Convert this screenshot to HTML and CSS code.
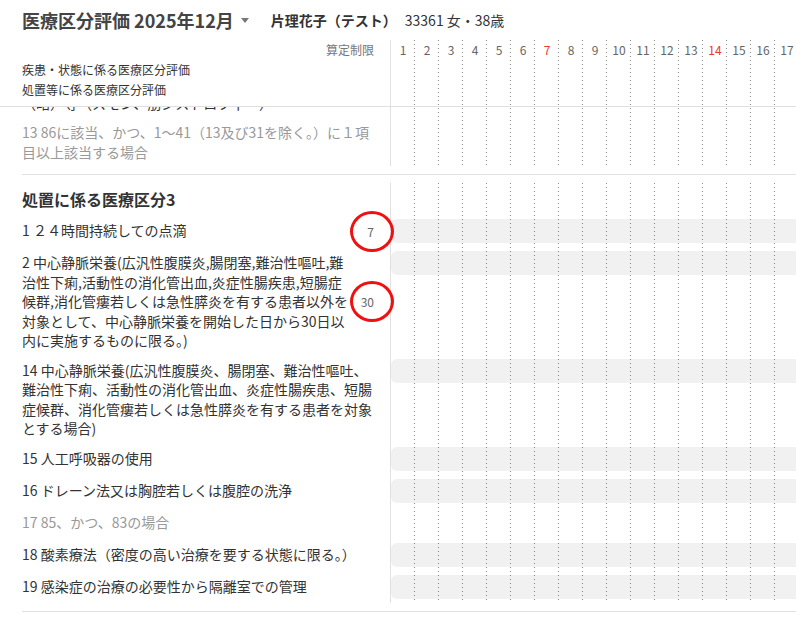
FILE: index.html
```html
<!DOCTYPE html>
<html lang="ja">
<head>
    <meta charset="UTF-8">
    <meta name="viewport" content="width=device-width, initial-scale=1.0">
    <title>医療区分評価</title>
    <link rel="stylesheet" href="styles.css">
</head>
<body>
    <header class="sheet-head">
        <div class="topbar">
            <h1 class="title">医療区分評価 2025年12月</h1>
            <svg class="caret" width="8" height="5" viewBox="0 0 8 5"><path d="M0 0h8L4 5z" fill="#777"/></svg>
            <span class="patient-name">片理花子（テスト）</span>
            <span class="patient-info">33361 女・38歳</span>
        </div>
        <div class="ruled head-grid">
            <div class="head-label">
                <div class="limit-title">算定制限</div>
                <div>疾患・状態に係る医療区分評価</div>
                <div>処置等に係る医療区分評価</div>
            </div>
            <div class="head-days">
                <span class="day">1</span><span class="day">2</span><span class="day">3</span>
                <span class="day">4</span><span class="day">5</span><span class="day">6</span>
                <span class="day sun">7</span><span class="day">8</span><span class="day">9</span>
                <span class="day">10</span><span class="day">11</span><span class="day">12</span>
                <span class="day">13</span><span class="day sun">14</span><span class="day">15</span>
                <span class="day">16</span><span class="day">17</span>
            </div>
        </div>
    </header>

    <main class="sheet">
        <div class="sheet-scroll">
            <!-- 疾患・状態（続き） -->
            <section class="group">
                <div class="ruled">
                    <div class="row">
                        <div class="label"><div class="text">12 神経難病等（筋萎縮性側索硬化症、多系統萎縮症<br>（略）等（スモン、筋ジストロフィー）</div></div>
                        <div class="track"><div class="bar"></div></div>
                    </div>
                    <div class="row muted">
                        <div class="label"><div class="text">13 86に該当、かつ、1〜41（13及び31を除く。）に１項目以上該当する場合</div></div>
                        <div class="track"></div>
                    </div>
                </div>
            </section>

            <!-- 処置 -->
            <section class="group">
                <div class="ruled">
                    <h2 class="group-title">処置に係る医療区分3</h2>
                    <div class="row">
                        <div class="label">
                            <div class="text">1 ２４時間持続しての点滴</div>
                            <div class="limit marked">7</div>
                        </div>
                        <div class="track"><div class="bar"></div></div>
                    </div>
                    <div class="row">
                        <div class="label">
                            <div class="text">2 中心静脈栄養(広汎性腹膜炎,腸閉塞,難治性嘔吐,難治性下痢,活動性の消化管出血,炎症性腸疾患,短腸症候群,消化管瘻若しくは急性膵炎を有する患者以外を対象として、中心静脈栄養を開始した日から30日以内に実施するものに限る。)</div>
                            <div class="limit marked">30</div>
                        </div>
                        <div class="track"><div class="bar"></div></div>
                    </div>
                    <div class="row">
                        <div class="label"><div class="text">14 中心静脈栄養(広汎性腹膜炎、腸閉塞、難治性嘔吐、難治性下痢、活動性の消化管出血、炎症性腸疾患、短腸症候群、消化管瘻若しくは急性膵炎を有する患者を対象とする場合)</div></div>
                        <div class="track"><div class="bar"></div></div>
                    </div>
                    <div class="row">
                        <div class="label"><div class="text">15 人工呼吸器の使用</div></div>
                        <div class="track"><div class="bar"></div></div>
                    </div>
                    <div class="row">
                        <div class="label"><div class="text">16 ドレーン法又は胸腔若しくは腹腔の洗浄</div></div>
                        <div class="track"><div class="bar"></div></div>
                    </div>
                    <div class="row muted">
                        <div class="label"><div class="text">17 85、かつ、83の場合</div></div>
                        <div class="track"></div>
                    </div>
                    <div class="row">
                        <div class="label"><div class="text">18 酸素療法（密度の高い治療を要する状態に限る。）</div></div>
                        <div class="track"><div class="bar"></div></div>
                    </div>
                    <div class="row">
                        <div class="label"><div class="text">19 感染症の治療の必要性から隔離室での管理</div></div>
                        <div class="track"><div class="bar"></div></div>
                    </div>
                </div>
            </section>
        </div>
    </main>
</body>
</html>
```

FILE: styles.css
```css
html, body {
    margin: 0;
    overflow: hidden;
}
body {
    font-family: "Noto Sans CJK JP", "Noto Sans", sans-serif;
    font-size: 14px;
    color: #333;
    background: #fff;
}

/* header */
.sheet-head {
    background: #fff;
    border-bottom: 1px solid #e0e0e0;
}
.topbar {
    display: flex;
    align-items: center;
    height: 40px;
    padding-left: 22px;
}
.title {
    margin: 0;
    font-size: 18px;
    font-weight: bold;
    line-height: 40px;
    color: #444;
}
.caret { margin-left: 7px; }
.patient-name {
    margin-left: 22px;
    font-weight: bold;
}
.patient-info { margin-left: 8px; }

/* label column + day columns with dotted separators */
.ruled {
    background:
        linear-gradient(#e0e0e0, #e0e0e0) 368px 0 / 1px 100% no-repeat,
        linear-gradient(#fff, #fff) 0 0 / 368px 100% no-repeat,
        conic-gradient(at 1px 1px, transparent 75%, #8a8a8a 0) 392px 0 / 24px 4px;
}
.head-grid {
    display: flex;
    margin-left: 22px;
    padding-bottom: 6px;
    font-size: 12px;
    line-height: 20px;
}
.head-label {
    width: 368px;
    box-sizing: border-box;
    padding-right: 16px;
}
.limit-title {
    text-align: right;
    color: #777;
}
.head-days {
    display: flex;
    flex: 1;
    min-width: 0;
    margin-left: 1px;
    color: #666;
}
.day {
    flex: none;
    width: 24px;
    text-align: center;
}
.day.sun { color: #e53935; }

/* body: scrolled list below the fixed header */
.sheet {
    height: calc(100vh - 107px);
    overflow: hidden;
}
.sheet-scroll { margin: -47px 0 0 22px; }
.group {
    padding: 8px 0;
    border-bottom: 1px solid #e0e0e0;
}
.group-title {
    margin: 0;
    padding: 4px 0;
    font-size: 16px;
    line-height: 24px;
    font-weight: bold;
}
.row {
    display: flex;
    padding: 4px 0;
}
.label {
    display: flex;
    width: 368px;
    min-height: 24px;
    box-sizing: border-box;
    padding: 2px 16px 0 0;
    line-height: 19.5px;
}
.text { flex: 1; }
.row.muted .text { color: #999; }
.limit {
    position: relative;
    align-self: center;
    width: 20px;
    margin-left: 4px;
    text-align: right;
    font-size: 12px;
    color: #666;
}
.limit.marked::after {
    content: "";
    position: absolute;
    top: 50%;
    right: -20px;
    width: 44px;
    height: 41px;
    margin-top: -21px;
    box-sizing: border-box;
    border: 3px solid #f01010;
    border-radius: 50%;
}
.track {
    flex: 1;
    margin-left: 1px;
}
.bar {
    height: 24px;
    background: rgba(0, 0, 0, 0.055);
    border-radius: 6px 0 0 6px;
}
```
